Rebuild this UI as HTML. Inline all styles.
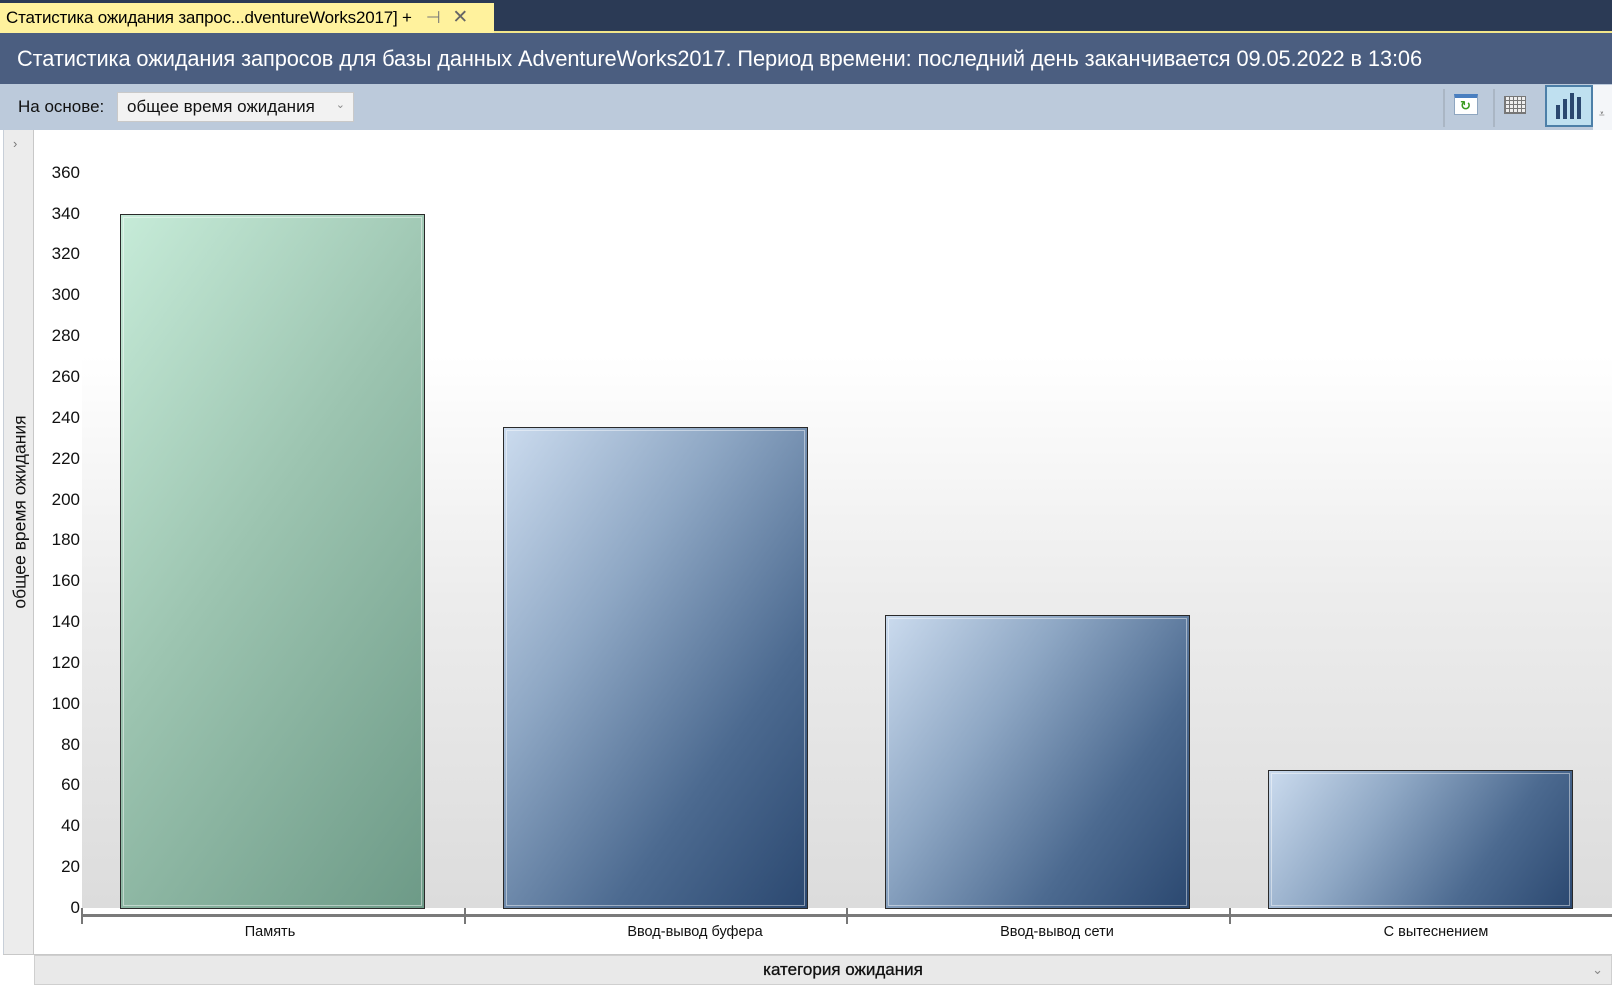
<!DOCTYPE html>
<html><head><meta charset="utf-8"><style>
*{margin:0;padding:0;box-sizing:border-box}
body{width:1612px;height:989px;overflow:hidden;background:#fff;font-family:"Liberation Sans","DejaVu Sans",sans-serif;position:relative}
.a{position:absolute}
.yl{position:absolute;left:40px;width:40px;text-align:right;font-size:17px;color:#111;line-height:20px}
.bar{position:absolute;border:1.5px solid #2a2a2a;bottom:81px}
.bar i{position:absolute;inset:2px;border:1px solid rgba(255,255,255,.45)}
.g{background:linear-gradient(125deg,#c6ebd8 0%,#9cc4b0 45%,#6d9a87 100%)}
.b{background:linear-gradient(125deg,#cbdbee 0%,#8ea7c4 35%,#4c6a90 70%,#2b4870 100%)}
.cl{position:absolute;top:924px;font-size:14.5px;color:#111;transform:translateX(-50%);white-space:nowrap}
.tk{position:absolute;top:908px;width:2px;height:16px;background:#777}
</style></head><body>
<div class="a" style="left:0;top:0;width:1612px;height:33px;background:#2b3a55"></div>
<div class="a" style="left:0;top:31px;width:1612px;height:2px;background:#f2e68a"></div>
<div class="a" style="left:0;top:3px;width:494px;height:30px;background:#fff29d;font-size:17px;line-height:30px;padding-left:6px;color:#000;white-space:nowrap;letter-spacing:-0.2px">Статистика ожидания запрос...dventureWorks2017] +<span style="color:#777;margin-left:14px">⊣</span><span style="color:#666;margin-left:12px;font-size:19px">✕</span></div>
<div class="a" style="left:0;top:33px;width:1612px;height:51px;background:#4b5e80;color:#fff;font-size:21.8px;line-height:51px;padding-left:17px;white-space:nowrap;letter-spacing:-0.1px">Статистика ожидания запросов для базы данных AdventureWorks2017. Период времени: последний день заканчивается 09.05.2022 в 13:06</div>
<div class="a" style="left:0;top:84px;width:1612px;height:46px;background:#bccadb"></div>
<div class="a" style="left:18px;top:97px;font-size:17px;color:#111">На основе:</div>
<div class="a" style="left:117px;top:92px;width:237px;height:30px;background:#f2f2f2;border:1px solid #c9c9c9;font-size:17px;line-height:28px;padding-left:9px;color:#111">общее время ожидания<span style="position:absolute;right:8px;top:-2px;font-size:11px;color:#888">⌄</span></div>
<div class="a" style="left:1443px;top:89px;width:2px;height:38px;background:#aab6c4"></div>
<div class="a" style="left:1493px;top:89px;width:2px;height:38px;background:#aab6c4"></div>
<div class="a" style="left:1454px;top:94px;width:24px;height:21px;background:#fff;border:1px solid #8fa6c0;border-top:4px solid #4a7fc0"><span style="position:absolute;left:5px;top:0;color:#3a9a20;font-size:13px;font-weight:bold">↻</span></div>
<div class="a" style="left:1504px;top:96px;width:22px;height:18px;background:repeating-linear-gradient(90deg,#777 0 1px,transparent 1px 4px),repeating-linear-gradient(0deg,#777 0 1px,#eee 1px 4px);border:1px solid #777"></div>
<div class="a" style="left:1545px;top:85px;width:48px;height:42px;background:#bfe0f0;border:2px solid #4c7fa8">
<div class="a" style="left:9px;top:18px;width:4px;height:14px;background:#2b4870"></div>
<div class="a" style="left:16px;top:12px;width:4px;height:20px;background:#2b4870"></div>
<div class="a" style="left:23px;top:6px;width:4px;height:26px;background:#2b4870"></div>
<div class="a" style="left:30px;top:10px;width:4px;height:22px;background:#2b4870"></div></div>
<div class="a" style="left:1593px;top:85px;width:19px;height:45px;background:#f4f6f9"><span style="position:absolute;left:6px;top:24px;font-size:10px;color:#555">⩡</span></div>
<div class="a" style="left:3px;top:130px;width:31px;height:825px;background:#ececec;border-right:1px solid #c8c8c8;border-left:1px solid #c8cfd8"></div>
<div class="a" style="left:13px;top:136px;font-size:13px;color:#777">›</div>
<div class="a" style="left:20px;top:512px;transform:translate(-50%,-50%) rotate(-90deg);font-size:17.5px;color:#111;white-space:nowrap">общее время ожидания</div>
<div class="a" style="left:82px;top:140px;width:1530px;height:768px;background:linear-gradient(#fff 0%,#fff 28%,#ececec 60%,#dcdcdc 100%)"></div>
<div class="yl" style="top:163px">360</div><div class="yl" style="top:204px">340</div><div class="yl" style="top:244px">320</div><div class="yl" style="top:285px">300</div><div class="yl" style="top:326px">280</div><div class="yl" style="top:367px">260</div><div class="yl" style="top:408px">240</div><div class="yl" style="top:449px">220</div><div class="yl" style="top:490px">200</div><div class="yl" style="top:530px">180</div><div class="yl" style="top:571px">160</div><div class="yl" style="top:612px">140</div><div class="yl" style="top:653px">120</div><div class="yl" style="top:694px">100</div><div class="yl" style="top:735px">80</div><div class="yl" style="top:775px">60</div><div class="yl" style="top:816px">40</div><div class="yl" style="top:857px">20</div><div class="yl" style="top:898px">0</div>
<div class="bar g" style="left:120px;width:305px;top:214px;bottom:80px"><i></i></div>
<div class="bar b" style="left:503px;width:305px;top:427px;bottom:80px"><i></i></div>
<div class="bar b" style="left:885px;width:305px;top:615px;bottom:80px"><i></i></div>
<div class="bar b" style="left:1268px;width:305px;top:770px;bottom:80px"><i></i></div>
<div class="a" style="left:82px;top:914px;width:1530px;height:3px;background:#7a7a7a"></div>
<div class="tk" style="left:81px"></div><div class="tk" style="left:464px"></div><div class="tk" style="left:846px"></div><div class="tk" style="left:1229px"></div>
<div class="cl" style="left:270px">Память</div>
<div class="cl" style="left:695px">Ввод-вывод буфера</div>
<div class="cl" style="left:1057px">Ввод-вывод сети</div>
<div class="cl" style="left:1436px">С вытеснением</div>
<div class="a" style="left:3px;top:954px;width:1609px;height:1px;background:#c8c8c8"></div>
<div class="a" style="left:34px;top:955px;width:1578px;height:30px;background:#e9e9e9;border:1px solid #cfcfcf;text-align:center;font-size:17px;line-height:28px;color:#111;padding-left:40px;-webkit-text-stroke:0.3px #111">категория ожидания<span style="position:absolute;right:8px;top:0;font-size:13px;color:#888;-webkit-text-stroke:0">⌄</span></div>
</body></html>
